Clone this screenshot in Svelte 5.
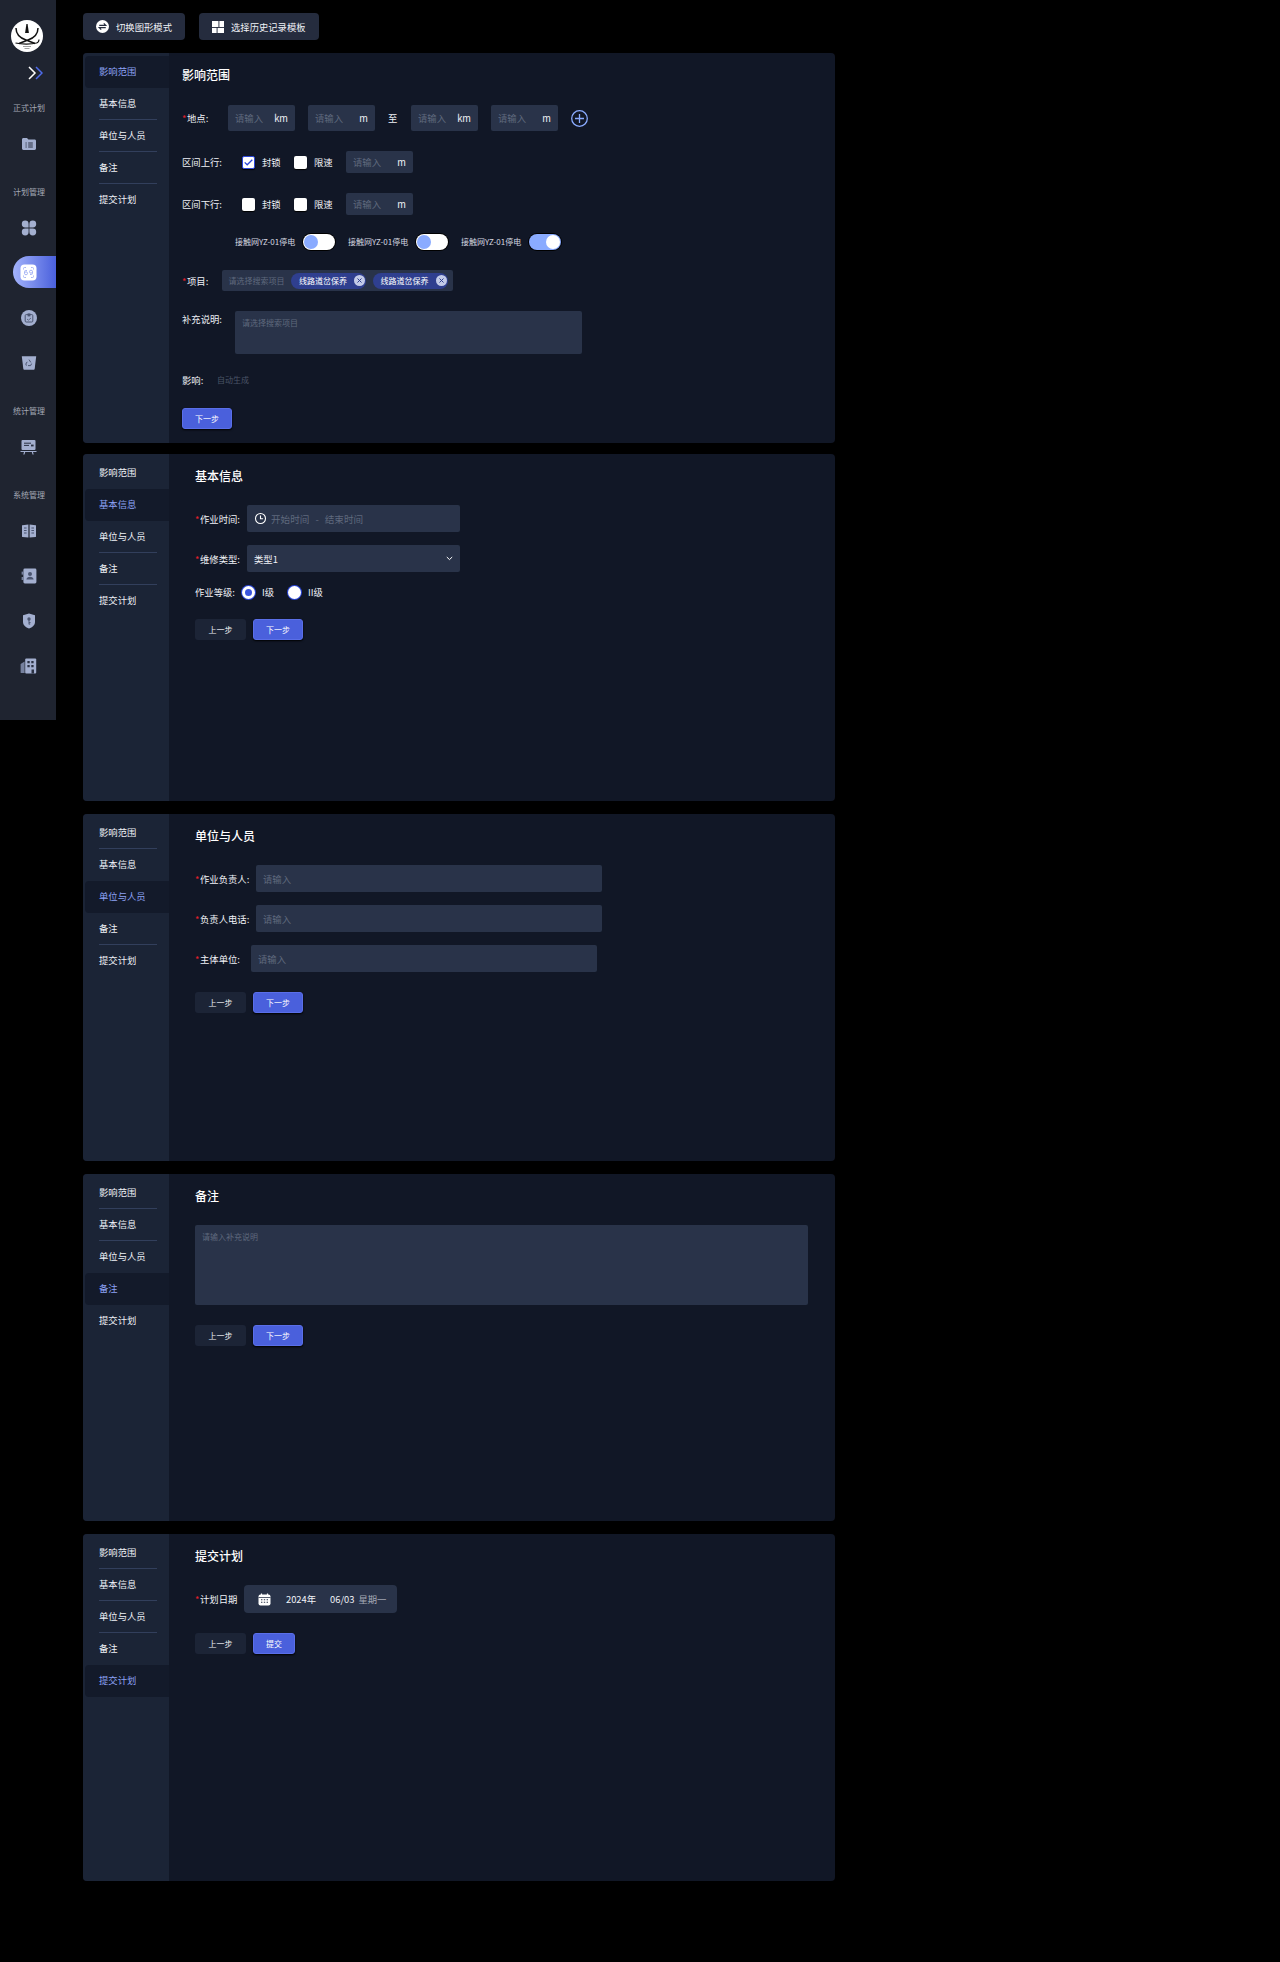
<script>
    const steps = ["影响范围", "基本信息", "单位与人员", "备注", "提交计划"];

    const menu = [
        {label: "正式计划", icons: ["folder"]},
        {label: "计划管理", icons: ["petals", "scan", "clip", "bin"]},
        {label: "统计管理", icons: ["board"]},
        {label: "系统管理", icons: ["book", "contact", "shield", "building"]}
    ];

    const switches = [false, false, true];
</script>

{#snippet stepNav(active)}
    <nav class="steps">
        {#each steps as step, i}
            <div class="step {i === active ? 'current' : ''}">
                {step}
                {#if i !== active && i + 1 !== active && i < 4}
                    <span class="line"></span>
                {/if}
            </div>
        {/each}
    </nav>
{/snippet}

{#snippet unitInput(unit)}
    <div class="unit-input">
        <input placeholder="请输入" />
        <span>{unit}</span>
    </div>
{/snippet}

{#snippet sideIcon(name)}
    {#if name === "folder"}
        <svg width="16" height="16" viewBox="0 0 16 16">
            <path d="M1 3.500C1 2.700 1.600 2 2.400 2H6l1.400 1.600h6.200c.8 0 1.400.6 1.400 1.400v7.500c0 .8-.6 1.400-1.400 1.400H2.400c-.8 0-1.400-.6-1.400-1.400z" fill="#a3afcf" />
            <path d="M4.500 7h1.200M7.200 7h4.600M4.500 9h1.200M7.200 9h4.600M4.500 11h1.200M7.200 11h4.600" stroke="#2a3142" stroke-width="1" />
        </svg>
    {:else if name === "petals"}
        <svg width="16" height="16" viewBox="0 0 16 16" fill="#a3afcf">
            <path d="M4.200.6a3.400 3.400 0 0 1 3.400 3.400v3.400H4.200a3.400 3.400 0 0 1 0-6.800z" />
            <path d="M11.800.6a3.400 3.400 0 0 1 0 6.800H8.400V4a3.400 3.400 0 0 1 3.400-3.400z" />
            <path d="M4.200 8.600h3.400V12a3.400 3.400 0 1 1-3.400-3.400z" />
            <path d="M8.400 8.600h3.400A3.400 3.400 0 1 1 8.400 12z" />
        </svg>
    {:else if name === "scan"}
        <svg width="17" height="17" viewBox="0 0 17 17">
            <rect x="0.5" y="0.5" width="16" height="16" rx="4" fill="#fff" />
            <path d="M3.500 5.500V4.500a1 1 0 0 1 1-1H6M11 3.500h1.500a1 1 0 0 1 1 1v1M13.500 11.500v1a1 1 0 0 1-1 1H11M6 13.500H4.500a1 1 0 0 1-1-1v-1" fill="none" stroke="#a8b6f5" stroke-width="1" />
            <circle cx="6" cy="9.300" r="1.500" fill="none" stroke="#a8b6f5" />
            <path d="M4.500 9.300V7.500c0-.6.5-1 1-1H7" fill="none" stroke="#a8b6f5" />
            <circle cx="11" cy="7.700" r="1.500" fill="none" stroke="#a8b6f5" />
            <path d="M12.500 7.700v1.800c0 .6-.5 1-1 1H10" fill="none" stroke="#a8b6f5" />
        </svg>
    {:else if name === "clip"}
        <svg width="16" height="16" viewBox="0 0 16 16">
            <circle cx="8" cy="8" r="8" fill="#a3afcf" />
            <rect x="4.200" y="4.600" width="7.600" height="7.400" rx="1" fill="none" stroke="#4b5570" stroke-width="1" />
            <path d="M6.600 3.400v3h2.800v-3" fill="#4b5570" />
            <path d="M6 9l1.400 1.200L10 8" fill="none" stroke="#4b5570" stroke-width=".8" />
        </svg>
    {:else if name === "bin"}
        <svg width="16" height="16" viewBox="0 0 16 16">
            <path d="M.8 1.200h14.400l-1.500 12.600c-.1.6-.6 1-1.200 1H3.500c-.6 0-1.100-.4-1.200-1z" fill="#a3afcf" />
            <path d="M8 4.600l1.800 2.800M10.600 8.600l-1 2H7M5.400 10.600l-.6-1.600 1.400-2.200" fill="none" stroke="#4b5570" stroke-width="1" />
        </svg>
    {:else if name === "board"}
        <svg width="17" height="16" viewBox="0 0 17 16">
            <rect x="1.500" y="1" width="14" height="10" rx="1" fill="#a3afcf" />
            <path d="M4 4.200h7M4 6.400h5" stroke="#2a3142" stroke-width="1" />
            <rect x="11" y="5.600" width="2.600" height="1.800" fill="#2a3142" />
            <path d="M.5 12h16v1H.5zM4 13h1.200l-.7 2.400H3.300zM11.800 13H13l.7 2.400h-1.200z" fill="#a3afcf" />
        </svg>
    {:else if name === "book"}
        <svg width="16" height="16" viewBox="0 0 16 16">
            <path d="M1.400 2.200L7.400 1.400v13L1.400 14c-.3 0-.4-.2-.4-.4V2.600c0-.2.2-.4.4-.4zM14.600 2.200l-6-.8v13l6-.4c.3 0 .4-.2.4-.4V2.600c0-.2-.2-.4-.4-.4z" fill="#a3afcf" />
            <path d="M3 5h2.600M3 7.500h2.600M3 10h2.600M10.400 5H13M10.400 7.500H13M10.400 10H13" stroke="#4b5570" stroke-width="1.200" />
        </svg>
    {:else if name === "contact"}
        <svg width="16" height="16" viewBox="0 0 16 16">
            <rect x="2.400" y="0.500" width="13" height="15" rx="1.400" fill="#a3afcf" />
            <rect x="0.600" y="3.600" width="2" height="3" fill="#76819e" />
            <rect x="0.600" y="9" width="2" height="3" fill="#76819e" />
            <circle cx="9" cy="6" r="2" fill="#4b5570" />
            <path d="M5.400 11.400c.3-1.800 1.600-2.600 3.600-2.600s3.300.8 3.600 2.600z" fill="#4b5570" />
        </svg>
    {:else if name === "shield"}
        <svg width="16" height="16" viewBox="0 0 16 16">
            <path d="M8 .5l6 1.800v6.600c0 3-2.600 5.400-6 6.600-3.400-1.200-6-3.600-6-6.600V2.300z" fill="#a3afcf" />
            <circle cx="8" cy="6" r="1.700" fill="#4b5570" />
            <path d="M8 7v4.400M8 9.500h1.500M8 11h1.200" stroke="#4b5570" stroke-width="1" />
        </svg>
    {:else if name === "building"}
        <svg width="17" height="16" viewBox="0 0 17 16">
            <path d="M.6 6l4-2.400V15H1.200c-.3 0-.6-.3-.6-.6z" fill="#76819e" />
            <rect x="5.200" y=".6" width="11" height="14.800" rx="1" fill="#a3afcf" />
            <path d="M7.400 3h2.300v2.300H7.400zM11.300 3h2.300v2.300h-2.300zM7.400 7h2.300v2.300H7.400zM11.300 7h2.300v2.300h-2.300zM11.500 11.500h2.500v3.900h-2.500z" fill="#2a3142" />
        </svg>
    {/if}
{/snippet}

<div class="page">
    <aside class="sidebar">
        <div class="logo">
            <svg width="32" height="32" viewBox="0 0 32 32">
                <circle cx="16" cy="16" r="16" fill="#fff" />
                <path d="M15.400 4h1.200l1.300 9h-3.800z" fill="#111" />
                <path d="M5 8c0 6 4 10 10 12l9 3.500M27 8c0 6-4 10-10 12l-9 3.500" fill="none" stroke="#111" stroke-width="1.500" />
                <path d="M4.500 23c6 1.500 16 1.500 21 0 1.800-.6 2.500-1.800 2.500-3.500" fill="none" stroke="#111" stroke-width="1.100" />
                <path d="M12 26.500h8M13.500 28.500h5" stroke="#888" stroke-width=".8" />
            </svg>
        </div>
        <div class="expand">
            <svg width="15" height="14" viewBox="0 0 15 14" fill="none" stroke-width="1.500">
                <path d="M1 1l6 6-6 6" stroke="#fff" />
                <path d="M8 1l6 6-6 6" stroke="#4f6bea" />
            </svg>
        </div>
        {#each menu as group}
            <section class="group">
                <div class="group-label">{group.label}</div>
                {#each group.icons as icon}
                    <div class="side-item {icon === 'scan' ? 'on' : ''}">
                        {@render sideIcon(icon)}
                    </div>
                {/each}
            </section>
        {/each}
    </aside>

    <main class="content">
        <div class="toolbar">
            <button class="tool">
                <svg width="13" height="13" viewBox="0 0 14 14">
                    <circle cx="7" cy="7" r="7" fill="#fff" />
                    <path d="M3.500 5.800h7L8.400 3.600M10.500 8.200h-7l2.100 2.200" fill="none" stroke="#252c3e" stroke-width="1.300" />
                </svg>
                切换图形模式
            </button>
            <button class="tool">
                <svg width="12" height="12" viewBox="0 0 13 13" fill="#fff">
                    <rect width="7" height="6.500" />
                    <rect x="8" width="5" height="6.500" />
                    <rect y="7.500" width="5" height="5.500" />
                    <rect x="6" y="7.500" width="7" height="5.500" />
                </svg>
                选择历史记录模板
            </button>
        </div>

        <div class="panel first">
            {@render stepNav(0)}
            <div class="body tight">
                <h2>影响范围</h2>
                <div class="row">
                    <label class="lbl" style="width: 46px"><i>*</i>地点:</label>
                    {@render unitInput("km")}
                    {@render unitInput("m")}
                    <span class="to">至</span>
                    {@render unitInput("km")}
                    {@render unitInput("m")}
                    <svg width="17" height="17" viewBox="0 0 17 17" fill="none" stroke="#8aabff" stroke-width="1.300">
                        <circle cx="8.500" cy="8.500" r="7.800" />
                        <path d="M4 8.500h9M8.500 4v9" />
                    </svg>
                </div>
                <div class="row small">
                    <label class="lbl" style="width: 60px">区间上行:</label>
                    <span class="check on">
                        <svg width="9" height="7" viewBox="0 0 9 7" fill="none" stroke="#2b46d8" stroke-width="1.300"><path d="M.7 3.400l2.500 2.400L8.300.7" /></svg>
                    </span>
                    <span class="opt">封锁</span>
                    <span class="check"></span>
                    <span class="opt">限速</span>
                    {@render unitInput("m")}
                </div>
                <div class="row small">
                    <label class="lbl" style="width: 60px">区间下行:</label>
                    <span class="check"></span>
                    <span class="opt">封锁</span>
                    <span class="check"></span>
                    <span class="opt">限速</span>
                    {@render unitInput("m")}
                </div>
                <div class="row switches">
                    {#each switches as on}
                        <span class="switch-label">接触网YZ-01停电</span>
                        <span class="switch {on ? 'on' : ''}"><b></b></span>
                    {/each}
                </div>
                <div class="row">
                    <label class="lbl" style="width: 40px"><i>*</i>项目:</label>
                    <div class="tags">
                        <span class="hint">请选择搜索项目</span>
                        {#each [1, 2] as tag}
                            <span class="tag">
                                线路道岔保养
                                <svg width="11" height="11" viewBox="0 0 11 11">
                                    <circle cx="5.500" cy="5.500" r="5.500" fill="#c3cbe8" />
                                    <path d="M3.500 3.500l4 4M7.500 3.500l-4 4" stroke="#2f3f8f" stroke-width="1" />
                                </svg>
                            </span>
                        {/each}
                    </div>
                </div>
                <div class="row top">
                    <label class="lbl" style="width: 53px">补充说明:</label>
                    <textarea class="area short" placeholder="请选择搜索项目"></textarea>
                </div>
                <div class="row impact">
                    <label class="lbl" style="width: 35px">影响:</label>
                    <span class="auto">自动生成</span>
                </div>
                <div class="actions">
                    <button class="btn primary">下一步</button>
                </div>
            </div>
        </div>

        <div class="panel">
            {@render stepNav(1)}
            <div class="body">
                <h2>基本信息</h2>
                <div class="form">
                    <div class="row">
                        <label class="lbl" style="width: 52px"><i>*</i>作业时间:</label>
                        <div class="field w213">
                            <svg width="13" height="13" viewBox="0 0 13 13" fill="none" stroke="#fff" stroke-width="1.100">
                                <circle cx="6.500" cy="6.500" r="5" />
                                <path d="M6.500 3.500v3.200h2.600" />
                            </svg>
                            <span class="range">开始时间<em>-</em>结束时间</span>
                        </div>
                    </div>
                    <div class="row">
                        <label class="lbl" style="width: 52px"><i>*</i>维修类型:</label>
                        <div class="field w213 select">
                            <span>类型1</span>
                            <svg width="7" height="5" viewBox="0 0 7 5" fill="none" stroke="#fff" stroke-width="1"><path d="M.8 1l2.700 2.600L6.200 1" /></svg>
                        </div>
                    </div>
                    <div class="row radios">
                        <label class="lbl">作业等级:</label>
                        <span class="radio on"></span>
                        <span class="opt">I级</span>
                        <span class="radio"></span>
                        <span class="opt">II级</span>
                    </div>
                </div>
                <div class="actions">
                    <button class="btn">上一步</button>
                    <button class="btn primary">下一步</button>
                </div>
            </div>
        </div>

        <div class="panel">
            {@render stepNav(2)}
            <div class="body">
                <h2>单位与人员</h2>
                <div class="form">
                    <div class="row">
                        <label class="lbl" style="width: 61px"><i>*</i>作业负责人:</label>
                        <input class="field w346" placeholder="请输入" />
                    </div>
                    <div class="row">
                        <label class="lbl" style="width: 61px"><i>*</i>负责人电话:</label>
                        <input class="field w346" placeholder="请输入" />
                    </div>
                    <div class="row">
                        <label class="lbl" style="width: 56px"><i>*</i>主体单位:</label>
                        <input class="field w346" placeholder="请输入" />
                    </div>
                </div>
                <div class="actions">
                    <button class="btn">上一步</button>
                    <button class="btn primary">下一步</button>
                </div>
            </div>
        </div>

        <div class="panel">
            {@render stepNav(3)}
            <div class="body">
                <h2>备注</h2>
                <textarea class="area tall" placeholder="请输入补充说明"></textarea>
                <div class="actions">
                    <button class="btn">上一步</button>
                    <button class="btn primary">下一步</button>
                </div>
            </div>
        </div>

        <div class="panel">
            {@render stepNav(4)}
            <div class="body">
                <h2>提交计划</h2>
                <div class="form">
                    <div class="row">
                        <label class="lbl" style="width: 49px"><i>*</i>计划日期</label>
                        <div class="date">
                            <svg width="13" height="13" viewBox="0 0 13 13">
                                <rect x=".5" y="1.500" width="12" height="11" rx="2" fill="#fff" />
                                <path d="M3.500 .5v2M9.500 .5v2" stroke="#fff" stroke-width="1.200" />
                                <path d="M.5 4.500h12" stroke="#293349" stroke-width=".8" />
                                <path d="M3 6.800h1.400M5.800 6.800h1.400M8.600 6.800H10M3 9.300h1.400M5.800 9.300h1.400M8.600 9.300H10" stroke="#293349" stroke-width="1.100" />
                            </svg>
                            <span class="year">2024年</span>
                            <span class="day">06/03</span>
                            <span class="week">星期一</span>
                        </div>
                    </div>
                </div>
                <div class="actions">
                    <button class="btn">上一步</button>
                    <button class="btn primary narrow">提交</button>
                </div>
            </div>
        </div>
    </main>
</div>

<style>
    :global(body) {
        background: #000;
    }

    .page {
        display: flex;
        align-items: flex-start;
        min-height: 1962px;
        font-family: "Noto Sans CJK SC", "Noto Sans", sans-serif;
        font-size: 9.33px;
        color: #f0f2f7;
    }

    .sidebar {
        width: 56px;
        height: 720px;
        flex: none;
        background: #1f2430;
        box-sizing: border-box;
        padding-top: 20px;
    }

    .logo {
        height: 32px;
        padding-left: 11px;
    }

    .logo svg, .expand svg {
        display: block;
    }

    .expand {
        margin-top: 14px;
        height: 14px;
        padding-left: 28px;
    }

    .group {
        margin-bottom: 19px;
    }

    .group:first-of-type {
        margin-top: 21px;
    }

    .group-label {
        font-size: 8px;
        line-height: 14px;
        color: #a4a9b5;
        text-align: center;
        padding-left: 2px;
        margin-bottom: 6px;
    }

    .side-item {
        height: 45px;
        display: flex;
        align-items: center;
        justify-content: center;
        position: relative;
    }

    .side-item.on::before {
        content: "";
        position: absolute;
        left: 13px;
        right: 0;
        top: 6px;
        bottom: 7px;
        background: linear-gradient(90deg, #a3b3fb, #4a60dc);
        border-radius: 16px 0 0 16px;
    }

    .side-item svg {
        position: relative;
        margin-left: 1px;
    }

    .content {
        padding: 13px 0 0 27px;
        width: 752px;
    }

    .toolbar {
        display: flex;
        gap: 14px;
        margin-bottom: 13px;
    }

    .tool {
        height: 27px;
        padding: 0 13px;
        display: flex;
        align-items: center;
        gap: 7px;
        background: #252c3e;
        border: none;
        border-radius: 4px;
        color: #f0f2f7;
        font: inherit;
    }

    .tool svg {
        flex: none;
    }

    .panel {
        width: 752px;
        height: 347px;
        display: flex;
        margin-bottom: 13px;
        border-radius: 4px;
        overflow: hidden;
        background: #111726;
    }

    .panel.first {
        height: 390px;
        margin-bottom: 11px;
    }

    .steps {
        width: 86px;
        flex: none;
        background: #1b2436;
        box-sizing: border-box;
        padding: 3px 0 0 2px;
    }

    .step {
        height: 32px;
        line-height: 31px;
        padding-left: 14px;
        position: relative;
    }

    .step.current {
        background: #131a2a;
        color: #8da2f5;
        border-radius: 4px 0 0 4px;
    }

    .line {
        position: absolute;
        left: 14px;
        width: 58px;
        bottom: 0;
        height: 1px;
        background: #323f5c;
    }

    .body {
        flex: 1;
        padding: 12px 26px;
        display: flex;
        flex-direction: column;
        align-items: flex-start;
    }

    .body.tight {
        padding-left: 13px;
        gap: 20px;
    }

    h2 {
        margin: 0;
        font-size: 12px;
        font-weight: 500;
        line-height: 20px;
        color: #fff;
    }

    .row {
        display: flex;
        align-items: center;
        line-height: 14px;
    }

    .row.top {
        align-items: flex-start;
    }

    .row.top .lbl {
        margin-top: 1px;
    }

    .lbl {
        flex: none;
        white-space: nowrap;
    }

    .lbl i {
        color: #e0202c;
        font-style: normal;
        display: inline-block;
        width: 5px;
    }

    input, textarea {
        font: inherit;
        border: none;
        outline: none;
        color: #fff;
    }

    input::placeholder, textarea::placeholder {
        color: #5f697d;
    }

    .unit-input {
        width: 67px;
        height: 26px;
        box-sizing: border-box;
        padding: 0 7px;
        margin-right: 13px;
        display: flex;
        align-items: center;
        background: #293349;
        border-radius: 2px;
        flex: none;
    }

    .unit-input input {
        flex: 1;
        min-width: 0;
        padding: 0;
        background: none;
    }

    .small .unit-input {
        height: 22px;
        margin-left: 13px;
    }

    .to {
        width: 23px;
    }

    .check {
        width: 13px;
        height: 13px;
        box-sizing: border-box;
        background: #fff;
        border-radius: 2px;
        box-shadow: 0 1px 1px #000;
        display: inline-flex;
        align-items: center;
        justify-content: center;
        flex: none;
    }

    .check.on {
        border: 1px solid #2b46d8;
    }

    .opt {
        margin-left: 7px;
        width: 19px;
        margin-right: 13px;
        white-space: nowrap;
    }

    .small .opt:last-of-type {
        margin-right: 0;
    }

    .switches {
        padding-left: 53px;
        margin-top: -1px;
        height: 16px;
    }

    .switch-label {
        font-size: 8px;
        width: 61px;
        margin-right: 7px;
        white-space: nowrap;
        color: #d5d8e0;
    }

    .switch {
        width: 32px;
        height: 16px;
        margin-right: 13px;
        background: #fff;
        border-radius: 8px;
        box-shadow: 0 0 0 1px #000;
        display: flex;
        align-items: center;
        padding: 0 1px;
        box-sizing: border-box;
    }

    .switch b {
        width: 14px;
        height: 14px;
        border-radius: 50%;
        background: #8aabff;
    }

    .switch.on {
        background: #8aabff;
        justify-content: flex-end;
    }

    .switch.on b {
        background: #fff;
    }

    .tags {
        width: 231px;
        height: 21px;
        box-sizing: border-box;
        padding-left: 6.500px;
        display: flex;
        align-items: center;
        gap: 6.500px;
        background: #293349;
        border-radius: 2px;
        font-size: 8px;
    }

    .hint {
        color: #5f697d;
        white-space: nowrap;
    }

    .tag {
        height: 16px;
        width: 75px;
        box-sizing: border-box;
        padding: 0 1px 0 8px;
        display: flex;
        align-items: center;
        justify-content: space-between;
        background: #2f3f8f;
        border-radius: 8px;
        color: #fff;
        white-space: nowrap;
    }

    .area {
        display: block;
        box-sizing: border-box;
        padding: 6px 7px;
        background: #293349;
        border-radius: 2px;
        resize: none;
        font-size: 8px;
        line-height: 12px;
    }

    .area.short {
        width: 347px;
        height: 43px;
    }

    .area.tall {
        width: 613px;
        height: 80px;
        margin-top: 19px;
    }

    .impact {
        margin-top: -1px;
    }

    .auto {
        font-size: 8px;
        color: #4b5467;
    }

    .actions {
        display: flex;
        gap: 7px;
        margin-top: 20px;
    }

    .tight .actions {
        margin-top: 1px;
    }

    .btn {
        width: 51px;
        height: 21px;
        padding: 0;
        border: none;
        border-radius: 3px;
        background: #1c2436;
        color: #f0f2f7;
        font: inherit;
        font-size: 8px;
    }

    .btn.primary {
        width: 50px;
        background: #4a60dc;
        border: 1px solid #5a6fe8;
        box-sizing: border-box;
        box-shadow: 0 1px 2px #000;
        color: #fff;
    }

    .btn.primary.narrow {
        width: 42px;
    }

    .form {
        margin-top: 19px;
        display: flex;
        flex-direction: column;
        gap: 13px;
    }

    .field {
        height: 27px;
        box-sizing: border-box;
        padding: 0 7px;
        background: #293349;
        border-radius: 2px;
        display: flex;
        align-items: center;
    }

    .w213 {
        width: 213px;
    }

    .w346 {
        width: 346px;
    }

    .range {
        margin-left: 4px;
        font-size: 9.600px;
        color: #5f697d;
    }

    .range em {
        font-style: normal;
        margin: 0 6px;
    }

    .select {
        justify-content: space-between;
    }

    .radios .lbl {
        width: 47px;
    }

    .radio {
        width: 13px;
        height: 13px;
        box-sizing: border-box;
        border-radius: 50%;
        background: #fff;
        box-shadow: 0 0 0 1px #2b46d8;
        flex: none;
    }

    .radio.on {
        border: 3px solid #fff;
        background: #3b55dd;
    }

    .radios .opt {
        width: 13px;
    }

    .radios .opt:last-of-type {
        margin-right: 0;
    }

    .date {
        width: 153px;
        height: 28px;
        box-sizing: border-box;
        padding-left: 14px;
        display: flex;
        align-items: center;
        background: #293349;
        border-radius: 4px;
    }

    .year {
        margin-left: 15px;
    }

    .day {
        margin-left: 14px;
    }

    .week {
        margin-left: 4px;
        color: #a4a9b5;
    }
</style>
